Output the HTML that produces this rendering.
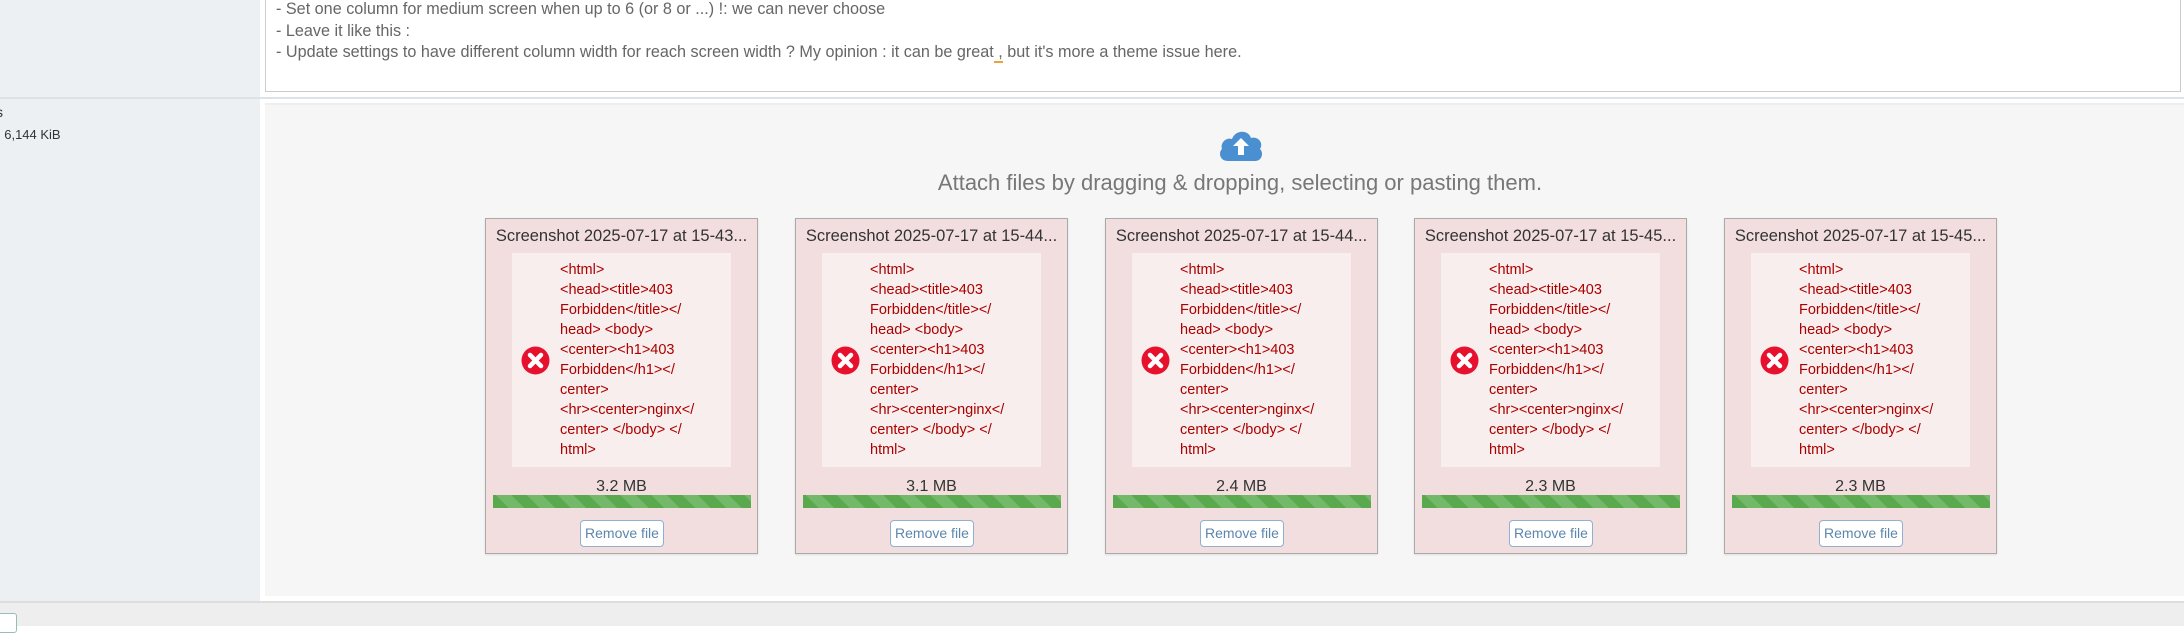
<!DOCTYPE html>
<html><head><meta charset="utf-8"><style>
*{box-sizing:border-box;margin:0;padding:0}
body{width:2184px;height:626px;position:relative;overflow:hidden;background:#fff;font-family:"Liberation Sans",sans-serif}
.side{position:absolute;left:0;top:0;width:260px;height:602px;background:#ecf0f3}
.sep{position:absolute;left:0;top:97px;width:2184px;height:2px;background:#dde2e6}
.ta{position:absolute;left:265px;top:-2px;width:1916px;height:94px;background:#fff;border:1px solid #ccc}
.ta p{position:absolute;left:11px;font-size:16.2px;color:#666;white-space:nowrap}
.dz{position:absolute;left:265px;top:103px;width:1925px;height:493px;background:#f6f6f6;border-top:2px solid #eee}
.bot{position:absolute;left:0;top:601px;width:2184px;height:25px;background:#eee;border-top:2px solid #ddd}
.card{position:absolute;top:218px;width:273px;height:336px;background:#f2dede;border:1px solid #aaa;box-shadow:0 1px 2px rgba(0,0,0,.1)}
.title{position:absolute;top:8px;left:0;width:100%;text-align:center;font-size:16.5px;color:#333;white-space:nowrap}
.prev{position:absolute;left:26px;top:34px;width:219px;height:214px;background:#f9eeee}
.code{position:absolute;left:74px;top:41px;font-size:14.5px;line-height:20px;color:#a00;white-space:pre}
.err{position:absolute;left:35px;top:127px;width:29px;height:29px}
.size{position:absolute;top:259px;width:100%;text-align:center;font-size:16px;color:#333}
.bar{position:absolute;left:7px;top:276px;width:258px;height:13px;background:repeating-linear-gradient(45deg,#5aa94e 0 11px,#74b86a 11px 22px)}
.btn{position:absolute;left:94px;top:301px;width:84px;height:27px;background:#fff;border:1px solid #8fb0cf;border-radius:4px;font-size:14px;color:#5d86ad;text-align:center;line-height:25px}
</style></head><body>
<div class="side"></div>
<div class="ta">
<p style="top:1px;left:10px">- Set one column for medium screen when up to 6 (or 8 or ...) !: we can never choose</p>
<p style="top:23px;left:10px">- Leave it like this :</p>
<p style="top:44px;left:10px">- Update settings to have different column width for reach screen width ? My opinion : it can be great<span style="border-bottom:2px solid #e8a33c"> ,</span> but it's more a theme issue here.</p>
</div>
<div class="sep"></div>
<div style="position:absolute;left:-4px;top:104px;font-size:14px;color:#333">s</div>
<div style="position:absolute;left:-3px;top:127px;font-size:13px;color:#333">: 6,144 KiB</div>
<div class="dz"></div>
<svg style="position:absolute;left:1218px;top:127px" width="46" height="36" viewBox="0 0 46 36"><path d="M10 34 C2 34 0 26 4 22 C2 16 8 10 14 12 C17 3 30 2 33 11 C40 9 46 16 42 22 C46 26 44 34 37 34 Z" fill="#4a8fd0"/><path d="M23 11 L31 19 L26 19 L26 28 L20 28 L20 19 L15 19 Z" fill="#fff"/></svg>
<div style="position:absolute;left:265px;width:1950px;top:170px;text-align:center;font-size:22px;color:#777">Attach files by dragging &amp; dropping, selecting or pasting them.</div>

<div class="card" style="left:485px"><div class="title">Screenshot 2025-07-17 at 15-43...</div><div class="prev"></div>
<div class="code">&lt;html&gt;
&lt;head&gt;&lt;title&gt;403
Forbidden&lt;/title&gt;&lt;/
head&gt; &lt;body&gt;
&lt;center&gt;&lt;h1&gt;403
Forbidden&lt;/h1&gt;&lt;/
center&gt;
&lt;hr&gt;&lt;center&gt;nginx&lt;/
center&gt; &lt;/body&gt; &lt;/
html&gt;</div>
<svg class="err" viewBox="0 0 29 29"><circle cx="14.5" cy="14.5" r="14" fill="#e8112d"/><path d="M9 9 L20 20 M20 9 L9 20" stroke="#fff" stroke-width="4.5" stroke-linecap="round"/></svg>
<div class="size">3.2 MB</div><div class="bar"></div><div class="btn">Remove file</div></div>

<div class="card" style="left:795px"><div class="title">Screenshot 2025-07-17 at 15-44...</div><div class="prev"></div>
<div class="code">&lt;html&gt;
&lt;head&gt;&lt;title&gt;403
Forbidden&lt;/title&gt;&lt;/
head&gt; &lt;body&gt;
&lt;center&gt;&lt;h1&gt;403
Forbidden&lt;/h1&gt;&lt;/
center&gt;
&lt;hr&gt;&lt;center&gt;nginx&lt;/
center&gt; &lt;/body&gt; &lt;/
html&gt;</div>
<svg class="err" viewBox="0 0 29 29"><circle cx="14.5" cy="14.5" r="14" fill="#e8112d"/><path d="M9 9 L20 20 M20 9 L9 20" stroke="#fff" stroke-width="4.5" stroke-linecap="round"/></svg>
<div class="size">3.1 MB</div><div class="bar"></div><div class="btn">Remove file</div></div>

<div class="card" style="left:1105px"><div class="title">Screenshot 2025-07-17 at 15-44...</div><div class="prev"></div>
<div class="code">&lt;html&gt;
&lt;head&gt;&lt;title&gt;403
Forbidden&lt;/title&gt;&lt;/
head&gt; &lt;body&gt;
&lt;center&gt;&lt;h1&gt;403
Forbidden&lt;/h1&gt;&lt;/
center&gt;
&lt;hr&gt;&lt;center&gt;nginx&lt;/
center&gt; &lt;/body&gt; &lt;/
html&gt;</div>
<svg class="err" viewBox="0 0 29 29"><circle cx="14.5" cy="14.5" r="14" fill="#e8112d"/><path d="M9 9 L20 20 M20 9 L9 20" stroke="#fff" stroke-width="4.5" stroke-linecap="round"/></svg>
<div class="size">2.4 MB</div><div class="bar"></div><div class="btn">Remove file</div></div>

<div class="card" style="left:1414px"><div class="title">Screenshot 2025-07-17 at 15-45...</div><div class="prev"></div>
<div class="code">&lt;html&gt;
&lt;head&gt;&lt;title&gt;403
Forbidden&lt;/title&gt;&lt;/
head&gt; &lt;body&gt;
&lt;center&gt;&lt;h1&gt;403
Forbidden&lt;/h1&gt;&lt;/
center&gt;
&lt;hr&gt;&lt;center&gt;nginx&lt;/
center&gt; &lt;/body&gt; &lt;/
html&gt;</div>
<svg class="err" viewBox="0 0 29 29"><circle cx="14.5" cy="14.5" r="14" fill="#e8112d"/><path d="M9 9 L20 20 M20 9 L9 20" stroke="#fff" stroke-width="4.5" stroke-linecap="round"/></svg>
<div class="size">2.3 MB</div><div class="bar"></div><div class="btn">Remove file</div></div>

<div class="card" style="left:1724px"><div class="title">Screenshot 2025-07-17 at 15-45...</div><div class="prev"></div>
<div class="code">&lt;html&gt;
&lt;head&gt;&lt;title&gt;403
Forbidden&lt;/title&gt;&lt;/
head&gt; &lt;body&gt;
&lt;center&gt;&lt;h1&gt;403
Forbidden&lt;/h1&gt;&lt;/
center&gt;
&lt;hr&gt;&lt;center&gt;nginx&lt;/
center&gt; &lt;/body&gt; &lt;/
html&gt;</div>
<svg class="err" viewBox="0 0 29 29"><circle cx="14.5" cy="14.5" r="14" fill="#e8112d"/><path d="M9 9 L20 20 M20 9 L9 20" stroke="#fff" stroke-width="4.5" stroke-linecap="round"/></svg>
<div class="size">2.3 MB</div><div class="bar"></div><div class="btn">Remove file</div></div>

<div class="bot"><div style="position:absolute;left:-4px;top:10px;width:21px;height:20px;background:#fff;border:1px solid #9bb;border-radius:3px"></div></div>
</body></html>
